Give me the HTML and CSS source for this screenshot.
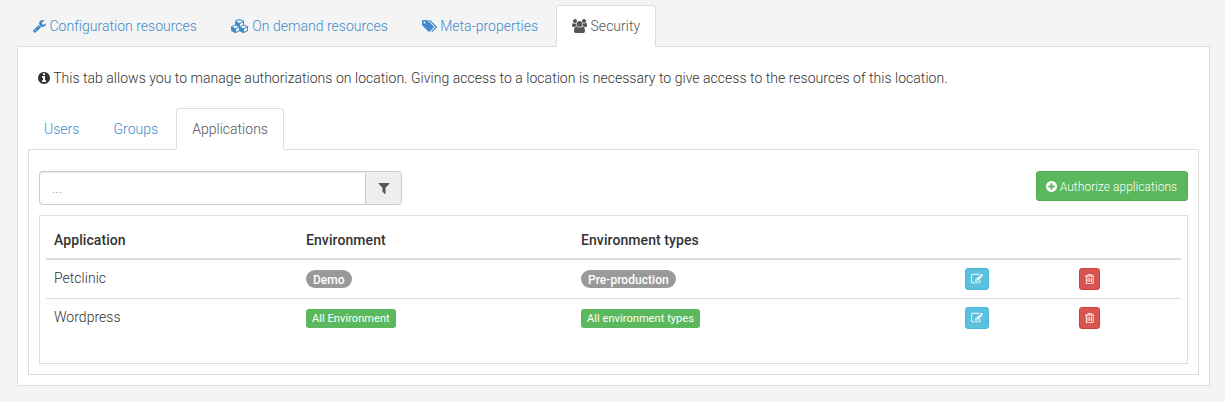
FILE: index.html
```
<!DOCTYPE html>
<html lang="en">
<head>
<meta charset="utf-8">
<title>Location security</title>
<link rel="stylesheet" href="styles.css">
</head>
<body>
<svg class="defs" width="0" height="0">
  <symbol id="wrench" viewBox="64 0 1664 1792"><path d="M448 1472q0-26-19-45t-45-19-45 19-19 45 19 45 45 19 45-19 19-45zm644-420l-682 682q-37 37-90 37-52 0-91-37l-106-108q-38-36-38-90 0-53 38-91l681-681q39 98 114.500 173.500t173.500 114.500zm634-435q0 39-23 106-47 134-164.500 217.500t-258.500 83.500q-185 0-316.500-131.500t-131.500-316.500 131.500-316.500 316.500-131.500q58 0 121.500 16.500t107.500 46.500q16 11 16 28t-16 28l-293 169v224l193 107q5-3 79-48.500t135.500-81 70.500-35.500q15 0 23.500 10t8.500 25z"/></symbol>
  <symbol id="cubes" viewBox="0 0 2304 1792"><path d="M640 1632l384-192v-314l-384 164v342zm-64-454l404-173-404-173-404 173zm1088 454l384-192v-314l-384 164v342zm-64-454l404-173-404-173-404 173zm-448-293l384-165v-266l-384 164v267zm-64-379l441-189-441-189-441 189zm1088 518v416q0 36-19 67t-52 47l-448 224q-25 14-57 14t-57-14l-448-224q-4-2-7-4-2 2-7 4l-448 224q-25 14-57 14t-57-14l-448-224q-33-16-52-47t-19-67v-416q0-38 21.500-70t56.500-48l434-186v-400q0-38 21.500-70t56.500-48l448-192q23-10 50-10t50 10l448 192q35 16 56.500 48t21.500 70v400l434 186q36 16 57 48t21 70z"/></symbol>
  <symbol id="tags" viewBox="0 0 1920 1792"><path d="M448 448q0-53-37.500-90.500t-90.500-37.500-90.500 37.500-37.500 90.500 37.500 90.500 90.500 37.500 90.500-37.500 37.500-90.500zm1067 576q0 53-37 90l-491 492q-39 37-91 37-53 0-90-37l-715-716q-38-37-64.500-101t-26.500-117v-416q0-52 38-90t90-38h416q53 0 117 26.500t102 64.500l715 714q37 39 37 91zm384 0q0 53-37 90l-491 492q-39 37-91 37-36 0-59-14t-53-45l470-470q37-37 37-90 0-52-37-91l-715-714q-38-38-102-64.500t-117-26.500h224q53 0 117 26.500t102 64.500l715 714q37 39 37 91z"/></symbol>
  <symbol id="users" viewBox="0 0 1920 1792"><path d="M593 896q-162 5-265 128h-134q-82 0-138-40.500t-56-118.500q0-353 124-353 6 0 43.500 21t97.500 42.500 119 21.500q67 0 133-23-5 37-5 66 0 159 93 288zm1071 637q0 120-73 189.500t-194 69.500h-874q-121 0-194-69.500t-73-189.500q0-53 3.500-103.500t14-109 26.500-108.500 43-97.500 62-81 85.500-53.500 111.500-20q10 0 43 21.500t73 48 107 48 135 21.500 135-21.500 107-48 73-48 43-21.500q61 0 111.500 20t85.500 53.500 62 81 43 97.500 26.500 108.500 14 109 3.500 103.500zm-1024-1277q0 106-75 181t-181 75-181-75-75-181 75-181 181-75 181 75 75 181zm704 384q0 159-112.500 271.500t-271.500 112.500-271.500-112.500-112.500-271.500 112.500-271.500 271.500-112.500 271.500 112.500 112.500 271.500zm576 225q0 78-56 118.500t-138 40.500h-134q-103-123-265-128 93-129 93-288 0-29-5-66 66 23 133 23 59 0 119-21.500t97.500-42.500 43.500-21q124 0 124 353zm-128-609q0 106-75 181t-181 75-181-75-75-181 75-181 181-75 181 75 75 181z"/></symbol>
  <symbol id="info" viewBox="128 0 1536 1792"><path d="M1152 1376v-160q0-14-9-23t-23-9h-96v-512q0-14-9-23t-23-9h-320q-14 0-23 9t-9 23v160q0 14 9 23t23 9h96v320h-96q-14 0-23 9t-9 23v160q0 14 9 23t23 9h448q14 0 23-9t9-23zm-128-896v-160q0-14-9-23t-23-9h-192q-14 0-23 9t-9 23v160q0 14 9 23t23 9h192q14 0 23-9t9-23zm640 416q0 209-103 385.500t-279.500 279.500-385.500 103-385.500-103-279.500-279.500-103-385.500 103-385.500 279.500-279.500 385.500-103 385.500 103 279.500 279.500 103 385.500z"/></symbol>
  <symbol id="plus" viewBox="128 0 1536 1792"><path d="M1344 960v-128q0-26-19-45t-45-19h-256v-256q0-26-19-45t-45-19h-128q-26 0-45 19t-19 45v256h-256q-26 0-45 19t-19 45v128q0 26 19 45t45 19h256v256q0 26 19 45t45 19h128q26 0 45-19t19-45v-256h256q26 0 45-19t19-45zm320-64q0 209-103 385.500t-279.500 279.500-385.500 103-385.500-103-279.500-279.500-103-385.500 103-385.500 279.500-279.500 385.500-103 385.500 103 279.500 279.500 103 385.500z"/></symbol>
  <symbol id="filter" viewBox="192 0 1408 1792"><path d="M1595 295q17 41-14 70l-493 493v742q0 42-39 59-13 5-25 5-27 0-45-19l-256-256q-19-19-19-45v-486l-493-493q-31-29-14-70 17-39 59-39h1280q42 0 59 39z"/></symbol>
  <symbol id="edit" viewBox="0 0 1792 1792"><path d="M888 1184l116-116-152-152-116 116v56h96v96h56zm440-720q-16-16-33 1l-350 350q-17 17-1 33t33-1l350-350q17-17 1-33zm80 594v190q0 119-84.500 203.500t-203.500 84.500h-832q-119 0-203.500-84.500t-84.500-203.500v-832q0-119 84.500-203.500t203.500-84.500h832q63 0 117 25 15 7 18 23 3 17-9 29l-49 49q-14 14-32 8-23-6-45-6h-832q-66 0-113 47t-47 113v832q0 66 47 113t113 47h832q66 0 113-47t47-113v-126q0-13 9-22l64-64q15-15 35-7t20 29zm-96-738l288 288-672 672h-288v-288zm444 132l-92 92-288-288 92-92q28-28 68-28t68 28l152 152q28 28 28 68t-28 68z"/></symbol>
  <symbol id="trash" viewBox="192 0 1408 1792"><path d="M704 736v576q0 14-9 23t-23 9h-64q-14 0-23-9t-9-23v-576q0-14 9-23t23-9h64q14 0 23 9t9 23zm256 0v576q0 14-9 23t-23 9h-64q-14 0-23-9t-9-23v-576q0-14 9-23t23-9h64q14 0 23 9t9 23zm256 0v576q0 14-9 23t-23 9h-64q-14 0-23-9t-9-23v-576q0-14 9-23t23-9h64q14 0 23 9t9 23zm128 724v-948h-896v948q0 22 7 40.500t14.500 27 10.500 8.500h832q3 0 10.500-8.500t14.500-27 7-40.500zm-672-1076h448l-48-117q-7-9-17-11h-317q-10 2-17 11zm928 32v64q0 14-9 23t-23 9h-96v948q0 83-47 143.500t-113 60.500h-832q-66 0-113-58.500t-47-141.500v-952h-96q-14 0-23-9t-9-23v-64q0-14 9-23t23-9h309l70-167q15-37 54-63t79-26h320q40 0 79 26t54 63l70 167h309q14 0 23 9t9 23z"/></symbol>
</svg>
<main class="page">
  <nav class="tabs">
    <a class="tab"><svg class="icon w13"><use href="#wrench"/></svg> Configuration resources</a>
    <a class="tab"><svg class="icon w18"><use href="#cubes"/></svg> On demand resources</a>
    <a class="tab"><svg class="icon w15"><use href="#tags"/></svg> Meta-properties</a>
    <a class="tab active"><svg class="icon w15"><use href="#users"/></svg> Security</a>
  </nav>
  <section class="panel outer">
    <p class="hint"><svg class="icon w12"><use href="#info"/></svg> This tab allows you to manage authorizations on location. Giving access to a location is necessary to give access to the resources of this location.</p>
    <nav class="tabs">
      <a class="tab">Users</a>
      <a class="tab">Groups</a>
      <a class="tab active">Applications</a>
    </nav>
    <section class="panel inner">
      <div class="toolbar">
        <div class="search">
          <input class="search-input" type="text" placeholder="...">
          <span class="addon"><svg class="icon w12"><use href="#filter"/></svg></span>
        </div>
        <button class="btn btn-sm success"><svg class="icon"><use href="#plus"/></svg> Authorize applications</button>
      </div>
      <div class="list">
        <table class="table">
          <thead>
            <tr><th class="c-app">Application</th><th class="c-env">Environment</th><th class="c-type">Environment types</th><th class="c-edit"></th><th></th></tr>
          </thead>
          <tbody>
            <tr>
              <td>Petclinic</td>
              <td><span class="badge">Demo</span></td>
              <td><span class="badge">Pre-production</span></td>
              <td><button class="btn btn-xs info"><svg class="icon"><use href="#edit"/></svg></button></td>
              <td><button class="btn btn-xs danger"><svg class="icon"><use href="#trash"/></svg></button></td>
            </tr>
            <tr>
              <td>Wordpress</td>
              <td><span class="label">All Environment</span></td>
              <td><span class="label">All environment types</span></td>
              <td><button class="btn btn-xs info"><svg class="icon"><use href="#edit"/></svg></button></td>
              <td><button class="btn btn-xs danger"><svg class="icon"><use href="#trash"/></svg></button></td>
            </tr>
          </tbody>
        </table>
      </div>
    </section>
  </section>
</main>
</body>
</html>
```
FILE: styles.css
```
* { box-sizing: border-box; }
body {
  margin: 0;
  background: #f4f4f4;
  color: #333;
  font: 300 14px/20px Roboto, sans-serif;
  letter-spacing: .03px;
}
.defs { display: block; }
.page { padding: 5px 15px 0 17px; }
.icon { height: 14px; fill: currentColor; vertical-align: -2px; }
.w12 { width: 12px; }
.w13 { width: 13px; }
.w15 { width: 15px; }
.w18 { width: 18px; }

.tabs { display: flex; border-bottom: 1px solid #ddd; letter-spacing: .02px; }
.tab {
  margin: 0 2px -1px 0;
  padding: 10px 15px;
  border: 1px solid transparent;
  border-radius: 4px 4px 0 0;
  color: #428bca;
}
.tab.active { background: #fff; border-color: #ddd #ddd #fff; color: #555; }
.panel { background: #fff; border: 1px solid #ddd; border-top: 0; padding: 10px; }
.outer { padding-top: 21px; }
.hint { margin: 0 0 20px; padding-left: 10px; }
.inner { padding-top: 21px; }

.toolbar { display: flex; justify-content: space-between; align-items: flex-start; margin-bottom: 10px; }
.search { display: flex; width: 363px; height: 34px; }
.search-input {
  flex: 1;
  min-width: 0;
  padding: 6px 12px;
  border: 1px solid #ccc;
  border-right: 0;
  border-radius: 4px 0 0 4px;
  box-shadow: inset 0 1px 1px rgba(0, 0, 0, .075);
  font: inherit;
}
.search-input::placeholder { color: #999; opacity: 1; }
.addon {
  width: 37px;
  padding-top: 6px;
  border: 1px solid #ccc;
  border-radius: 0 4px 4px 0;
  background: #eee;
  color: #555;
  text-align: center;
}
.btn { display: block; border: 1px solid; border-radius: 3px; color: #fff; font: 300 12px/18px Roboto, sans-serif; }
.btn-sm { width: 152px; padding: 6px 9px 4px; letter-spacing: .04px; white-space: nowrap; }
.btn-sm .icon { width: 11px; height: 13px; margin-left: -1px; }
.btn-xs { padding: 1px 5px; }
.btn-xs .icon { display: block; width: 12px; height: 12px; margin: 3px 0; }
.btn-xs.danger .icon { width: 9.4px; }
.success { background: #5cb85c; border-color: #4cae4c; }
.info { background: #5bc0de; border-color: #46b8da; }
.danger { background: #d9534f; border-color: #d43f3a; }

.list { height: 149px; padding: 6px; border: 1px solid #ddd; }
.table { width: 100%; table-layout: fixed; border-collapse: collapse; }
.table th { padding: 8px; border-bottom: 2px solid #ddd; font-weight: 500; letter-spacing: .08px; text-align: left; }
.table td { padding: 8px; border-top: 1px solid #ddd; vertical-align: top; }
.c-app { width: 252px; }
.c-env { width: 275px; }
.c-type { width: 384px; }
.c-edit { width: 114px; }
.badge {
  display: inline-block;
  margin-top: 2px;
  padding: 4px 7px 2px;
  border-radius: 10px;
  background: #999;
  color: #fff;
  font-size: 12px;
  font-weight: 500;
  letter-spacing: .04px;
  line-height: 12px;
  vertical-align: top;
}
.label {
  display: inline-block;
  margin-top: 2px;
  padding: 4px 6px;
  border-radius: 3px;
  background: #5cb85c;
  color: #fff;
  font-size: 11px;
  font-weight: 400;
  letter-spacing: .07px;
  line-height: 11px;
  vertical-align: top;
}
```
